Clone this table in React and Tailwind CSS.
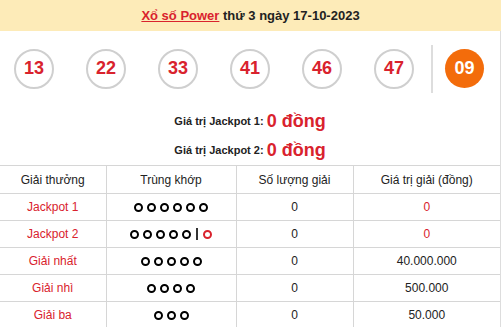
import React from "react";

const balls = ["13", "22", "33", "41", "46", "47"];

const Rings = ({ n, extra = false }) => (
  <div className="flex items-center justify-center gap-[4px]">
    {Array.from({ length: n }).map((_, i) => (
      <span key={i} className="w-[9px] h-[9px] rounded-full border-2 border-black" />
    ))}
    {extra && (
      <>
        <span className="w-[2px] h-[12px] bg-[#333] mx-[1px]" />
        <span className="w-[9px] h-[9px] rounded-full border-2 border-[#d9222d]" />
      </>
    )}
  </div>
);

const rows = [
  { name: "Jackpot 1", rings: <Rings n={6} />, qty: "0", value: "0", red: true },
  { name: "Jackpot 2", rings: <Rings n={5} extra />, qty: "0", value: "0", red: true },
  { name: "Giải nhất", rings: <Rings n={5} />, qty: "0", value: "40.000.000" },
  { name: "Giải nhì", rings: <Rings n={4} />, qty: "0", value: "500.000" },
  { name: "Giải ba", rings: <Rings n={3} />, qty: "0", value: "50.000" },
];

export default function App() {
  return (
    <div className="w-[501px] h-[327px] overflow-hidden bg-white" style={{ fontFamily: '"Liberation Sans", Arial, sans-serif' }}>
      <div className="h-[31px] bg-[#fdebb8] flex items-center justify-center text-[13px] font-bold text-[#222]">
        <span className="text-[#d9222d] underline">Xổ số Power</span>
        <span>&nbsp;thứ 3 ngày 17-10-2023</span>
      </div>

      <div className="border-r border-[#ddd]">
        <div className="h-[75px] flex items-center pl-[14px]">
          {balls.map((b) => (
            <div key={b} className="w-[40px] h-[40px] mr-[32px] rounded-full border-2 border-[#cfcfcf] flex items-center justify-center text-[18px] font-bold text-[#d9222d]">
              {b}
            </div>
          ))}
          <div className="w-[2px] h-[48px] bg-[#ddd] -ml-[15px] mr-[12px]" />
          <div className="w-[39px] h-[39px] rounded-full bg-[#f36c0b] flex items-center justify-center text-[18px] font-bold text-white">
            09
          </div>
        </div>

        <div className="flex flex-col items-center font-bold text-[11px] text-[#222]">
          <div className="h-[30px] flex items-center">
            Giá trị Jackpot 1:&nbsp;<span className="text-[18px] text-[#d9222d]">0 đồng</span>
          </div>
          <div className="h-[28px] flex items-center">
            Giá trị Jackpot 2:&nbsp;<span className="text-[18px] text-[#d9222d]">0 đồng</span>
          </div>
        </div>

        <table className="w-[500px] table-fixed border-collapse text-[12px] text-[#222] mt-[1px]">
          <colgroup>
            <col className="w-[106px]" />
            <col className="w-[130px]" />
            <col className="w-[117px]" />
            <col className="w-[147px]" />
          </colgroup>
          <thead>
            <tr className="h-[28px] border-t border-b border-[#d6d6d6]">
              <th className="font-normal">Giải thưởng</th>
              <th className="font-normal border-l border-[#d6d6d6]">Trùng khớp</th>
              <th className="font-normal border-l border-[#d6d6d6]">Số lượng giải</th>
              <th className="font-normal border-l border-[#d6d6d6]">Giá trị giải (đồng)</th>
            </tr>
          </thead>
          <tbody>
            {rows.map((r) => (
              <tr key={r.name} className="h-[27px] border-b border-[#d6d6d6]">
                <td className="text-center text-[#d9222d]">{r.name}</td>
                <td className="border-l border-[#d6d6d6]">{r.rings}</td>
                <td className="text-center border-l border-[#d6d6d6]">{r.qty}</td>
                <td className={`text-center border-l border-[#d6d6d6] ${r.red ? "text-[#d9222d]" : ""}`}>{r.value}</td>
              </tr>
            ))}
          </tbody>
        </table>
      </div>
    </div>
  );
}
